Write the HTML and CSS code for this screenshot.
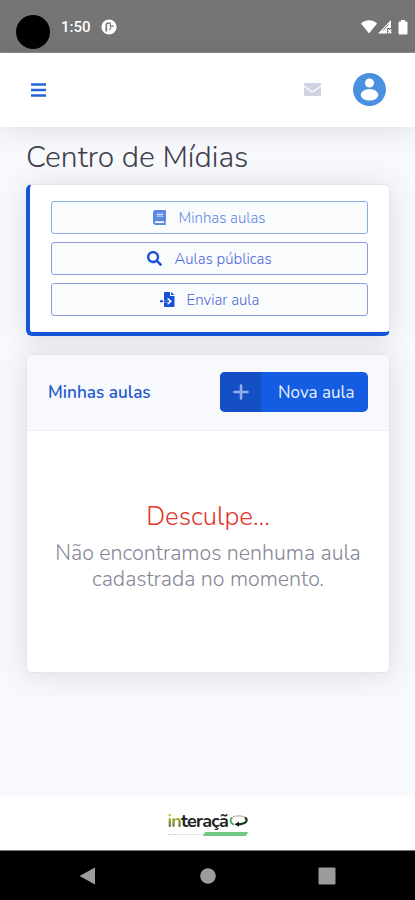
FILE: index.html
```html
<!DOCTYPE html>
<html lang="pt-BR">
<head>
    <meta charset="UTF-8">
    <meta name="viewport" content="width=device-width, initial-scale=1.0">
    <title>Centro de Mídias</title>
    <link rel="stylesheet" href="styles.css">
</head>
<body>
    <!-- Barra de status -->
    <div class="status-bar">
        <span class="camera"></span>
        <span class="clock">1:50</span>
        <svg class="status-app" viewBox="0 0 16 16">
            <circle cx="8" cy="8" r="7.600" fill="#fff"/>
            <path d="M5.300 12.500V5.500q0-1.300 1.300-1.300H8.500" fill="none" stroke="#757575" stroke-width="1.600"/>
            <path d="M9.300 3.500v3.700h3.500M8.300 10.800q1.500-.3 1.500-2.500" fill="none" stroke="#757575" stroke-width="1.200"/>
        </svg>
        <div class="status-icons">
            <svg class="wifi" viewBox="0 0 16 14"><path d="M0 3.400C4.600-.7 11.400-.7 16 3.400L8 13.600z" fill="#fff"/></svg>
            <svg class="signal" viewBox="0 0 14 14"><path d="M13 0v8H9v5.500H0z" fill="#fff"/><path d="M5 10.500L10.500 4.500" stroke="#757575" stroke-width="1"/><path d="M10 9.500l3.300 3.700M13.300 9.500L10 13.200" stroke="#fff" stroke-width="1.400"/></svg>
            <svg class="battery" viewBox="0 0 10 15"><path d="M3 0h4v1.500h1.500q1 0 1 1V13.500q0 1-1 1h-7q-1 0-1-1V2.500q0-1 1-1H3z" fill="#fff"/></svg>
        </div>
    </div>

    <header class="topbar">
        <button class="icon-btn" aria-label="Menu">
            <svg class="menu-icon" viewBox="0 0 15 14"><path d="M0 1.500h15M0 7h15M0 12.500h15" stroke="#2363d9" stroke-width="2.400"/></svg>
        </button>
        <div class="topbar-right">
            <svg class="mail-icon" viewBox="0 0 17 13"><rect width="17" height="13" rx="1" fill="#d1d3e2"/><path d="M0 3l6.800 5q1.700 1.200 3.400 0L17 3" fill="none" stroke="#fff" stroke-width="1.200"/></svg>
            <svg class="avatar" viewBox="0 0 33 33">
                <circle cx="16.500" cy="16.500" r="16.500" fill="#4a90df"/>
                <circle cx="16.500" cy="10" r="4.500" fill="#fff"/>
                <ellipse cx="16.500" cy="21.800" rx="8.800" ry="5.800" fill="#fff"/>
            </svg>
        </div>
    </header>

    <main class="content">
        <h1 class="page-title">Centro de Mídias</h1>

        <!-- Menu de opções -->
        <nav class="card card-menu">
            <a class="btn-outline active" href="#">
                <svg class="icon-book" viewBox="0 0 448 512"><path fill="currentColor" d="M448 360V24c0-13.300-10.700-24-24-24H96C43 0 0 43 0 96v320c0 53 43 96 96 96h328c13.300 0 24-10.700 24-24v-16c0-7.500-3.500-14.300-8.900-18.700-4.200-15.400-4.200-59.300 0-74.700 5.400-4.300 8.900-11.100 8.900-18.600zM128 134c0-3.300 2.700-6 6-6h212c3.300 0 6 2.700 6 6v20c0 3.300-2.700 6-6 6H134c-3.300 0-6-2.700-6-6v-20zm0 64c0-3.300 2.700-6 6-6h212c3.300 0 6 2.700 6 6v20c0 3.300-2.700 6-6 6H134c-3.300 0-6-2.700-6-6v-20zm253.400 250H96c-17.700 0-32-14.300-32-32 0-17.600 14.400-32 32-32h285.400c-1.900 17.100-1.900 46.900 0 64z"/></svg>
                <span class="btn-label">Minhas aulas</span>
            </a>
            <a class="btn-outline" href="#">
                <svg class="icon-search" viewBox="0 0 512 512"><path fill="currentColor" d="M505 442.700L405.300 343c-4.500-4.500-10.600-7-17-7H372c27.600-35.300 44-79.700 44-128C416 93.100 322.900 0 208 0S0 93.100 0 208s93.100 208 208 208c48.300 0 92.700-16.400 128-44v16.300c0 6.400 2.500 12.500 7 17l99.700 99.700c9.400 9.400 24.600 9.400 33.900 0l28.300-28.300c9.400-9.400 9.400-24.600.1-34zM208 336c-70.700 0-128-57.200-128-128 0-70.700 57.200-128 128-128 70.700 0 128 57.200 128 128 0 70.700-57.200 128-128 128z"/></svg>
                <span class="btn-label">Aulas públicas</span>
            </a>
            <a class="btn-outline" href="#">
                <svg class="icon-upload" viewBox="0 0 15 15"><path fill="currentColor" d="M4 1q0-1 1-1h5v4h4.500v10q0 1-1 1H5q-1 0-1-1v-3.500h3.700V13L12 9.300 7.700 5.500V8H4zM11 0l3.500 3H11z"/><path fill="currentColor" d="M0 8.300h3v2H0zM4 8.300h5v2H4z"/></svg>
                <span class="btn-label">Enviar aula</span>
            </a>
        </nav>

        <section class="card card-list">
            <div class="card-header">
                <h2 class="card-title">Minhas aulas</h2>
                <a class="btn-new" href="#">
                    <span class="btn-new-icon">
                        <svg class="icon-plus" viewBox="0 0 16 16"><path d="M8 1.500v13M1.500 8h13" stroke="#8eaff0" stroke-width="2.600" stroke-linecap="round"/></svg>
                    </span>
                    <span class="btn-new-text">Nova aula</span>
                </a>
            </div>
            <div class="card-body">
                <p class="sorry">Desculpe...</p>
                <p class="message">Não encontramos nenhuma aula<br>cadastrada no momento.</p>
            </div>
        </section>
    </main>

    <footer class="footer">
        <div class="logo">
            <div class="logo-name">
                <span class="logo-text"><span class="logo-in">in</span>teraçã</span>
                <svg class="logo-mark" viewBox="0 0 19 12">
                    <path d="M5 9.500C1 8.500.5 4 3.500 2.500" fill="none" stroke="#4fa34a" stroke-width="1.800"/>
                    <path d="M4 1.800C8 .3 14 .5 16.500 3" fill="none" stroke="#9aa59a" stroke-width="1"/>
                    <path d="M16 2.500C19.500 5 17.500 9 9 9.300" fill="none" stroke="#17401c" stroke-width="2.200"/>
                    <path d="M10 6.800v5L5.500 9.300z" fill="#111"/>
                </svg>
            </div>
            <div class="logo-sub">
                <span class="logo-line"></span>
                <span class="logo-tag"></span>
            </div>
        </div>
    </footer>

    <!-- Navegação do sistema -->
    <div class="nav-bar">
        <svg class="nav-icon" viewBox="0 0 18 18"><path d="M16 .5v17L.5 9z" fill="#9c9c9c"/></svg>
        <svg class="nav-icon" viewBox="0 0 18 18"><circle cx="9" cy="9" r="7.800" fill="#9c9c9c"/></svg>
        <svg class="nav-icon" viewBox="0 0 18 18"><rect x=".5" y=".5" width="17" height="17" rx="1" fill="#9c9c9c"/></svg>
    </div>
</body>
</html>
```

FILE: styles.css
```css
* {
    box-sizing: border-box;
}

body {
    font-family: Nunito, 'Open Sans', sans-serif;
    background: #f8f9fc;
    margin: 0;
    height: 900px;
    display: flex;
    flex-direction: column;
    overflow: hidden;
}

h1, h2, p {
    margin: 0;
}

a {
    text-decoration: none;
}

svg {
    display: block;
    flex: none;
}

/* Barra de status */
.status-bar {
    height: 53px;
    flex: none;
    background: #757575;
    border-bottom: 1px solid #8c8c8c;
    display: flex;
    align-items: center;
    padding: 2px 7px 0 16px;
}

.camera {
    width: 34px;
    height: 34px;
    border-radius: 50%;
    background: #000000;
    margin-top: 10px;
}

.clock {
    color: #ffffff;
    font: 500 15px/18px Roboto, sans-serif;
    margin-left: 11px;
    width: 39px;
}

.status-app {
    width: 16px;
    height: 16px;
    margin-left: 1px;
}

.status-icons {
    display: flex;
    align-items: center;
    margin-left: auto;
}

.wifi {
    width: 16px;
    height: 14px;
}

.signal {
    width: 14px;
    height: 14px;
    margin-left: 1px;
}

.battery {
    width: 10px;
    height: 15px;
    margin-left: 6px;
}

/* Topo */
.topbar {
    height: 74px;
    flex: none;
    background: #ffffff;
    box-shadow: 0 2px 28px rgba(58, 59, 69, 0.15);
    display: flex;
    align-items: center;
    justify-content: space-between;
    padding: 0 29px 1px 31px;
}

.icon-btn {
    border: 0;
    padding: 0;
    background: none;
}

.menu-icon {
    width: 15px;
    height: 14px;
}

.topbar-right {
    display: flex;
    align-items: center;
    gap: 32px;
}

.mail-icon {
    width: 17px;
    height: 13px;
}

.avatar {
    width: 33px;
    height: 33px;
}

/* Conteúdo */
.content {
    flex: 1;
    padding: 12px 25px 0 26px;
}

.page-title {
    color: #3f404d;
    font-size: 30px;
    font-weight: 300;
    line-height: 38px;
    white-space: nowrap;
}

.card {
    background: #ffffff;
    border: 1px solid #e3e6f0;
    border-radius: 6px;
    box-shadow: 0 2px 28px rgba(58, 59, 69, 0.15);
}

.card-menu {
    margin-top: 7px;
    height: 152px;
    border-left: 4px solid #1455d9;
    border-bottom: 4px solid #1455d9;
    padding: 16px 21px 0;
    display: flex;
    flex-direction: column;
    gap: 8px;
}

.btn-outline {
    height: 33px;
    flex: none;
    border: 1px solid #8c9be6;
    border-radius: 3px;
    background: #fafbfd;
    color: #1450d8;
    display: flex;
    align-items: center;
    justify-content: center;
    font-size: 15px;
    font-weight: 300;
    line-height: 20px;
    white-space: nowrap;
}

.btn-label {
    color: #4a68d8;
}

.btn-outline.active {
    border-color: #88abed;
}

.btn-outline.active,
.active .btn-label {
    color: #5b89e2;
}

.icon-book {
    width: 13px;
    height: 15px;
    margin-right: 12px;
}

.icon-search {
    width: 15px;
    height: 15px;
    margin-right: 12px;
}

.icon-upload {
    width: 15px;
    height: 15px;
    margin-right: 12px;
}

.card-list {
    margin-top: 18px;
    height: 319px;
}

.card-header {
    height: 76px;
    background: #f8f9fc;
    border-bottom: 1px solid #eceef4;
    border-radius: 6px 6px 0 0;
    display: flex;
    align-items: center;
    justify-content: space-between;
    padding: 0 21px 2px;
}

.card-title {
    color: #2459d0;
    font-size: 17.2px;
    font-weight: 600;
    padding-top: 2px;
    white-space: nowrap;
}

.btn-new {
    width: 148px;
    height: 40px;
    border-radius: 5px;
    background: #145de2;
    overflow: hidden;
    display: flex;
}

.btn-new-icon {
    width: 41px;
    background: #1450c3;
    display: flex;
    align-items: center;
    justify-content: center;
}

.icon-plus {
    width: 16px;
    height: 16px;
}

.btn-new-text {
    flex: 1;
    color: #e8effc;
    font-size: 17px;
    line-height: 41px;
    padding-left: 17px;
    white-space: nowrap;
}

.card-body {
    padding-top: 69px;
    text-align: center;
    white-space: nowrap;
}

.sorry {
    color: #e2382e;
    font-size: 25.8px;
    font-weight: 300;
    line-height: 34px;
}

.message {
    color: #858796;
    font-size: 21.4px;
    font-weight: 300;
    line-height: 26px;
    margin-top: 6px;
}

/* Rodapé */
.footer {
    height: 53px;
    flex: none;
    background: #ffffff;
    display: flex;
    justify-content: center;
    padding-top: 13px;
}

.logo {
    width: 80px;
}

.logo-name {
    display: flex;
    align-items: center;
    height: 22px;
}

.logo-text {
    width: 61px;
    color: #222222;
    font: 700 18px/22px Nunito, 'Open Sans', sans-serif;
    letter-spacing: -0.8px;
}

.logo-in {
    background: linear-gradient(#c5c922 25%, #46694b 80%);
    background-clip: text;
    -webkit-background-clip: text;
    color: transparent;
}

.logo-mark {
    width: 19px;
    height: 12px;
}

.logo-sub {
    display: flex;
    align-items: center;
}

.logo-line {
    width: 36px;
    border-top: 1px dotted #c3cbc5;
}

.logo-tag {
    width: 43px;
    height: 4px;
    background: #6fca83;
    transform: skewX(-30deg);
}

/* Botões do sistema */
.nav-bar {
    height: 50px;
    flex: none;
    background: #000000;
    border-top: 1px solid #777777;
    display: flex;
    align-items: center;
    justify-content: space-between;
    padding: 0 79px;
}

.nav-icon {
    width: 18px;
    height: 18px;
}
```
